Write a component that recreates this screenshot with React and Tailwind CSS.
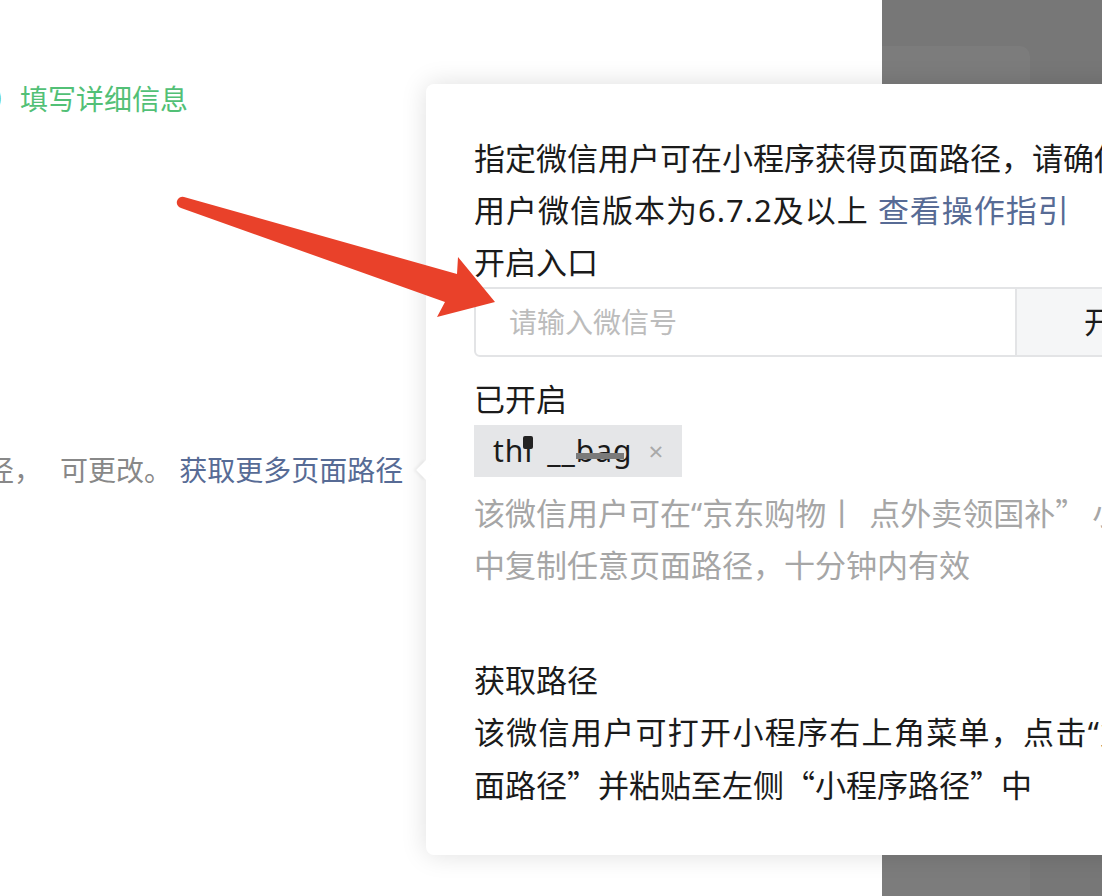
import React from 'react'

const cjk = "font-['Noto_Sans_CJK_SC',sans-serif]"

const Arrow = () => (
  <svg className="pointer-events-none absolute left-0 top-0 z-20" width="1102" height="896" viewBox="0 0 1102 896">
    <path
      d="M184 197 L457 274 L458 257 L495 302 L437 317 L445 302 L181 208 A5.6 5.6 0 0 1 184 197 Z"
      fill="#e9412a"
    />
  </svg>
)

const Popover = () => {
  return (
    <div className="absolute left-[426px] top-[84px] z-10 h-[771px] w-[720px] rounded-[8px] bg-white pl-[48px] pt-[48px] shadow-[0_0_26px_rgba(0,0,0,0.13)]">
      <span className="absolute left-[-7px] top-[379px] h-[14px] w-[14px] rotate-45 bg-white shadow-[-2px_2px_3px_rgba(0,0,0,0.05)]" />
      <div className="relative whitespace-nowrap text-[31px] leading-[52px] text-[#1b1b1b]">
        <p>指定微信用户可在小程序获得页面路径，请确保</p>
        <p className="tracking-[1px]">
          用户微信版本为6.7.2及以上 <span className="text-[#576b95]">查看操作指引</span>
        </p>
        <p>开启入口</p>
        <div className="-mt-[1px] flex h-[70px] w-[680px] overflow-hidden rounded-[6px] border-2 border-[#e3e4e6]">
          <div className="flex w-[539px] items-center pl-[33px] text-[28px] text-[#bcbcbc]">请输入微信号</div>
          <div className="flex flex-1 items-center border-l-2 border-[#e3e4e6] bg-[#f5f6f7] pl-[67px] text-[30px]">开启</div>
        </div>

        <p className="mt-[16px]">已开启</p>
        <div className="flex">
          <div className="flex h-[52px] items-center gap-[16px] bg-[#e5e6e8] pl-[19px] pr-[18px] text-[30px] tracking-[1px]">
            <span>
              th
              <span className="relative">
                l
                <span className="absolute left-[-1px] top-[6px] h-[13px] w-[10px] rounded-[2px] bg-[#222]" />
              </span>
              <span className="inline-block w-[14px]" />
              __
              <span className="relative">
                bag
                <span className="absolute left-0 top-[23px] h-[6px] w-[48px] bg-[#7a7a7a]" />
              </span>
            </span>
            <span className="text-[26px] text-[#a9a9a9]">×</span>
          </div>
        </div>

        <div className="mt-[9px] text-[#a6a6a6]">
          <p>
            该微信用户可在“京东购物<span className="mr-[12px]">丨</span>点外卖领国补
            <span className={cjk}>”</span>
            <span className="ml-[6px]">小程序</span>
          </p>
          <p>中复制任意页面路径，十分钟内有效</p>
        </div>

        <p className="mt-[63px]">获取路径</p>
        <p className="tracking-[1.3px]">该微信用户可打开小程序右上角菜单，点击“复制页</p>
        <p>
          面路径<span className={cjk}>”</span>并粘贴至左侧<span className={cjk}>“</span>小程序路径
          <span className={cjk}>”</span>中
        </p>
      </div>
    </div>
  )
}

export default function App() {
  return (
    <div className="relative h-[896px] w-[1102px] overflow-hidden bg-white font-['Noto_Sans','Noto_Sans_CJK_SC',sans-serif]">
      <div className="flex h-full">
        <main className="w-[882px] whitespace-nowrap pt-[79px] text-[28px] leading-[40px]">
          <p className="ml-[-8px] text-[#52c076]">）填写详细信息</p>
          <p className="ml-[-42px] mt-[331px] text-[#888]">
            路径，<span className="ml-[18px]">可更改。 </span>
            <span className="text-[#576b95]">获取更多页面路径</span>
          </p>
        </main>
        <aside className="flex-1 bg-[#777]">
          <div className="mt-[46px] h-full w-[148px] rounded-tr-[10px] bg-[#7c7c7c]" />
        </aside>
      </div>
      <Popover />
      <Arrow />
    </div>
  )
}
